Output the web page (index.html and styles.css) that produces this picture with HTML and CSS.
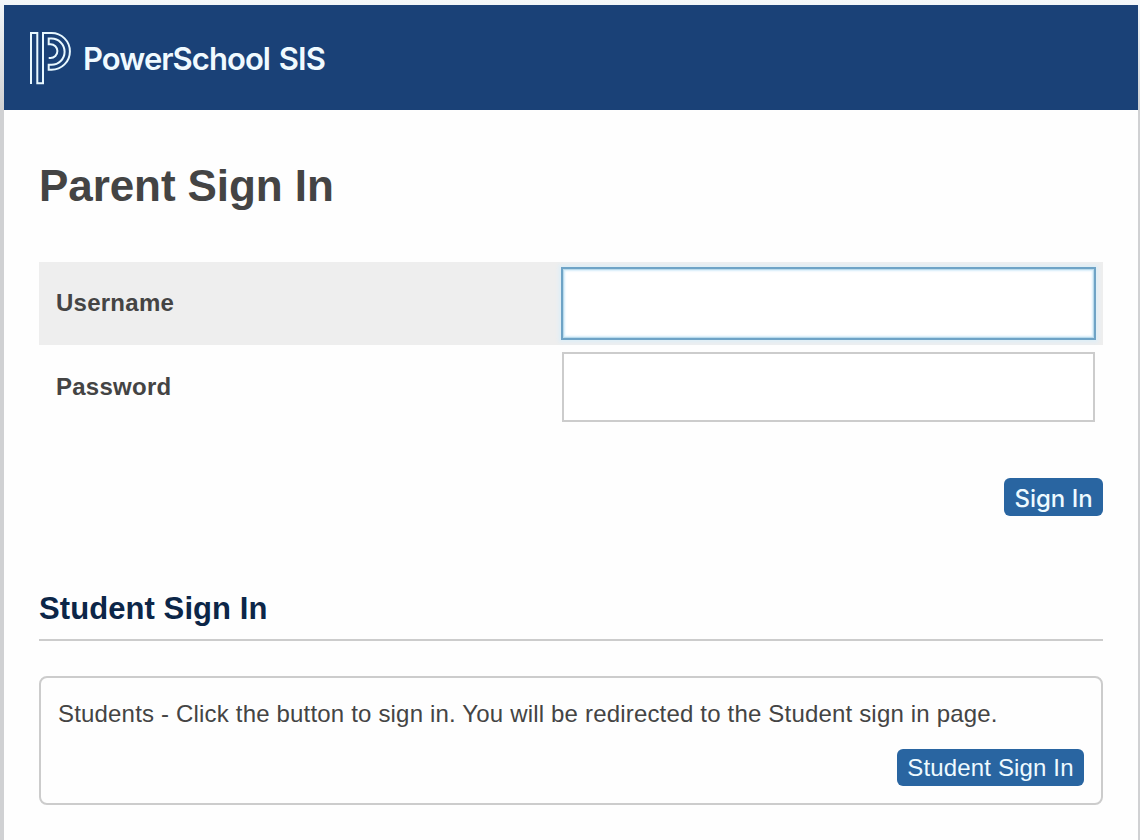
FILE: index.html
```html
<!DOCTYPE html>
<html lang="en">
<head>
  <meta charset="UTF-8">
  <meta name="viewport" content="width=device-width, initial-scale=1.0">
  <title>Parent Sign In</title>
  <link rel="stylesheet" href="styles.css">
</head>
<body>
  <div class="container">
    <header class="brand">
      <svg class="logo" width="44" height="54" viewBox="0 0 44 54" fill="none" stroke="#e8f8ff" stroke-width="2">
        <path d="M3 53V2H9.3V52.3H15V2H23.5A18.4 18.4 0 0 1 23.5 38.8H20.7V33.8H23.5A13.1 13.1 0 0 0 23.5 7.6H20.7V13.2H22.5A6.9 6.9 0 0 1 22.5 27H20.7"/>
      </svg>
      <span class="brand-name">PowerSchool SIS</span>
    </header>
    <main class="content">
      <h1>Parent Sign In</h1>
      <form>
        <div class="field shaded">
          <label for="username">Username</label>
          <input type="text" id="username" class="focused">
        </div>
        <div class="field">
          <label for="password">Password</label>
          <input type="password" id="password">
        </div>
        <div class="button-row">
          <button type="button" class="sign-in">Sign In</button>
        </div>
      </form>
      <h2>Student Sign In</h2>
      <div class="student-box">
        <p>Students - Click the button to sign in. You will be redirected to the Student sign in page.</p>
        <button type="button" class="student-btn">Student Sign In</button>
      </div>
    </main>
  </div>
</body>
</html>
```
FILE: styles.css
```css
* {
  box-sizing: border-box;
}
body {
  margin: 0;
  height: 840px;
  padding: 5px 2px 0 4px;
  overflow: hidden;
  background: linear-gradient(#f3f7fa, #d0d1d3 110px);
  font-family: "Liberation Sans", Arial, sans-serif;
  color: #444;
}
.container {
  height: 835px;
  background-color: #fefefe;
}
.brand {
  display: flex;
  align-items: center;
  height: 105px;
  padding-left: 24px;
  background-color: #1a4177;
}
.brand-name {
  margin: 2px 0 0 11px;
  font-family: Inter, sans-serif;
  font-size: 31px;
  font-weight: 600;
  line-height: 40px;
  letter-spacing: -0.95px;
  word-spacing: 2px;
  color: #f0faff;
}
.content {
  padding: 50px 35px 0;
}
h1 {
  margin: 0 0 50px;
  font-size: 44px;
  line-height: 52px;
  letter-spacing: -0.08px;
}
.field {
  display: flex;
  align-items: center;
  justify-content: space-between;
  height: 83px;
  padding: 0 8px 0 17px;
}
.shaded {
  background-color: #eee;
}
label {
  font-size: 24px;
  font-weight: bold;
  letter-spacing: 0.25px;
}
.shaded label {
  margin-bottom: 1px;
}
input {
  width: 533px;
  height: 70px;
  border: 2px solid #ccc;
  background-color: #fff;
}
input.focused {
  height: 71px;
  border: 2px solid #b9daeb;
  outline: 2px solid #6ea3c6;
  outline-offset: -1px;
  box-shadow: 0 0 4px 3px #dceef8, inset 0 0 2px 1px #d5edfa;
}
.button-row {
  display: flex;
  justify-content: flex-end;
  margin-top: 50px;
}
button {
  padding: 0;
  border: none;
  border-radius: 6px;
  background-color: #2965a1;
  color: #eefaff;
}
.sign-in {
  width: 99px;
  height: 38px;
  padding-top: 2px;
  font-family: Inter, sans-serif;
  font-size: 24px;
  font-weight: 500;
}
h2 {
  margin: 75px 0 36px;
  padding-bottom: 12px;
  border-bottom: 2px solid #ccc;
  font-size: 31px;
  line-height: 36px;
  letter-spacing: 0.08px;
  color: #0c2648;
}
.student-box {
  display: flex;
  flex-direction: column;
  align-items: flex-end;
  height: 129px;
  margin-top: -1px;
  padding: 21px 17px 0;
  border: 2px solid #ccc;
  border-radius: 8px;
}
.student-box p {
  width: 100%;
  margin: 0 0 20px;
  font-size: 24px;
  line-height: 30px;
  letter-spacing: 0.18px;
  white-space: nowrap;
}
.student-btn {
  width: 187px;
  height: 37px;
  font-family: inherit;
  font-size: 24px;
  letter-spacing: 0.15px;
}
```
